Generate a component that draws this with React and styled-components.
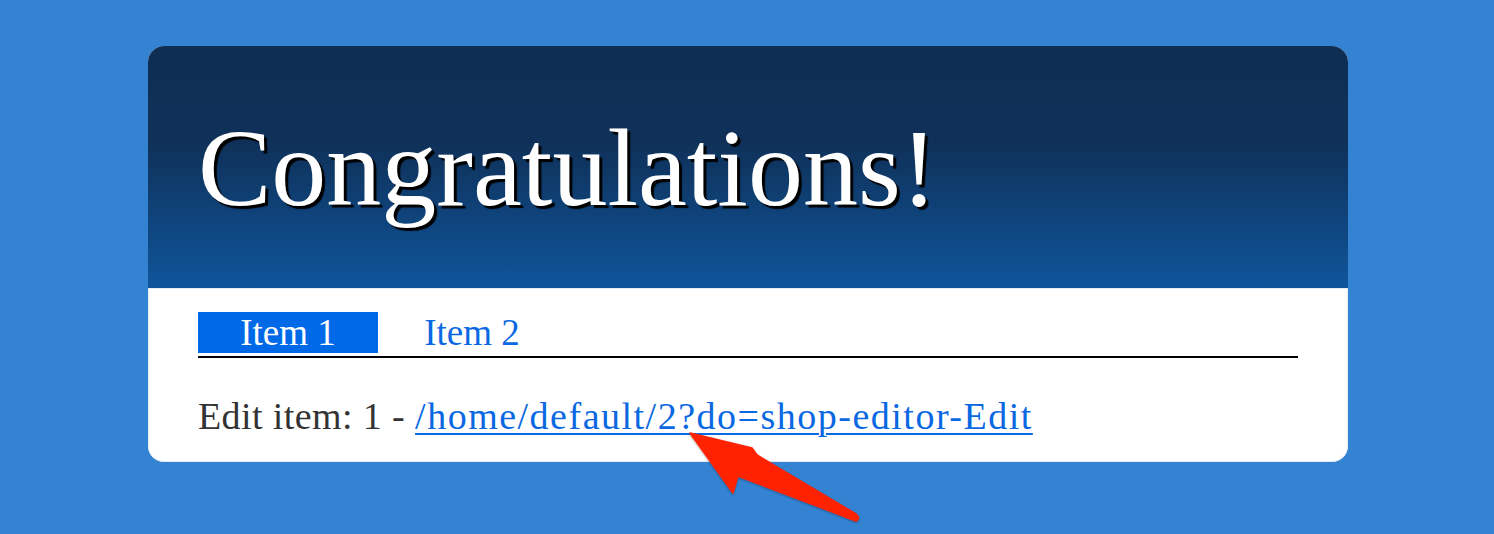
import React from "react";
import styled, { createGlobalStyle } from "styled-components";

const Global = createGlobalStyle`
  html, body { margin: 0; padding: 0; }
  body {
    background: #3483d3;
    font-family: "Liberation Serif", "Times New Roman", serif;
    min-height: 534px;
  }
`;

const Page = styled.div`
  padding: 46px 0 0 148px;
  position: relative;
  height: 488px;
`;

const Card = styled.div`
  width: 1200px;
  border-radius: 16px;
  overflow: hidden;
  background: #fff;
`;

const Header = styled.header`
  height: 242px;
  box-sizing: border-box;
  padding: 67px 50px 0;
  background: linear-gradient(to bottom, #0e2e54 0%, #0f3159 40%, #0f4680 75%, #0f559b 100%);
`;

const Title = styled.h1`
  margin: 0;
  font-family: "Liberation Serif", "Times New Roman", serif;
  font-weight: normal;
  font-size: 110px;
  line-height: 110px;
  color: #fff;
  text-shadow: 3px 3px 1px #000;
`;

const Body = styled.div`
  padding: 24px 50px 22px;
  border-radius: 0 0 16px 16px;
  box-shadow: inset 0 0 0 1px #e3ebf4;
`;

const Tabs = styled.ul`
  list-style: none;
  margin: 0;
  padding: 0 0 3px;
  display: flex;
  gap: 4px;
  border-bottom: 2px solid #000;
`;

const Tab = styled.li`
  width: 180px;
  height: 41px;
  line-height: 41px;
  text-align: center;
  font-size: 37px;
  background: ${(p) => (p.$active ? "#0069e8" : "transparent")};
  color: ${(p) => (p.$active ? "#fff" : "#0a68e2")};
`;

const Line = styled.p`
  margin: 36px 0 0;
  font-size: 38px;
  line-height: 1.2;
  letter-spacing: 0.4px;
  color: #333;
`;

const Link = styled.a`
  color: #0a68e2;
  letter-spacing: 1.5px;
  text-decoration: underline;
  text-decoration-thickness: 2px;
  text-underline-offset: 4px;
`;

const Arrow = styled.svg`
  position: absolute;
  left: 0;
  top: 0;
  pointer-events: none;
`;

export default function App() {
  return (
    <>
      <Global />
      <Page>
        <Card>
          <Header>
            <Title>Congratulations!</Title>
          </Header>
          <Body>
            <Tabs>
              <Tab $active>Item 1</Tab>
              <Tab>Item 2</Tab>
            </Tabs>
            <Line>
              Edit item: 1 - <Link href="#">/home/default/2?do=shop-editor-Edit</Link>
            </Line>
          </Body>
        </Card>
        <Arrow width="1494" height="534" viewBox="0 0 1494 534">
          <defs>
            <filter id="sh" x="-20%" y="-20%" width="140%" height="140%">
              <feDropShadow dx="0" dy="1" stdDeviation="1" floodColor="#000" floodOpacity="0.35" />
            </filter>
          </defs>
          <path
            d="M690 433 L752 448 L757 455 L856 514 Q861 518 856 521 L738 476 L733 493 Z"
            fill="#ff2200"
            stroke="#ff2200"
            strokeWidth="1.5"
            strokeLinejoin="round"
            filter="url(#sh)"
          />
        </Arrow>
      </Page>
    </>
  );
}
